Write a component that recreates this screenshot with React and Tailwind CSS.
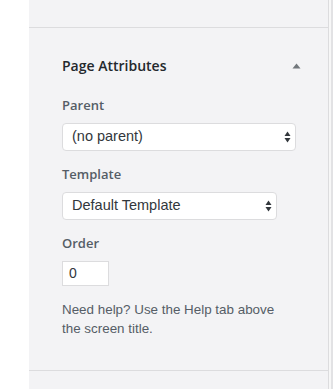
import React from 'react';

const SelectArrows = () => (
  <svg width="7" height="12" viewBox="0 0 7 12" className="shrink-0">
    <path d="M3.5 0.5 L6.5 5 L0.5 5 Z" fill="#32373c" />
    <path d="M3.5 11.5 L6.5 7 L0.5 7 Z" fill="#32373c" />
  </svg>
);

const FakeSelect = ({ value, width }) => (
  <div
    className={`${width} h-[28px] flex items-center justify-between pl-[9px] pr-[4px] bg-white border border-[#dcdcde] rounded-[4px] text-[14.5px] text-[#32373c]`}
    style={{ fontFamily: '"Liberation Sans", Arial, sans-serif' }}
  >
    <span>{value}</span>
    <SelectArrows />
  </div>
);

const App = () => {
  return (
    <div className="w-[333px] h-[389px] flex bg-white overflow-hidden">
      {/* left gutter */}
      <div className="w-[29px] bg-white" />

      {/* sidebar panel */}
      <div
        className="w-[300px] bg-[#f3f3f5] border-r border-[#dcdcde] flex flex-col"
        style={{ fontFamily: '"Open Sans", "Noto Sans", sans-serif' }}
      >
        <div className="h-[28px] border-b border-[#dcdcde]" />

        <div className="pl-[33px] pr-[27px] pt-[28px] h-[343px] border-b border-[#dcdcde]">
          {/* header */}
          <div className="flex items-center justify-between h-[20px]">
            <h2 className="text-[14px] font-semibold text-[#23282d] leading-[20px]">Page Attributes</h2>
            <svg width="9" height="6" viewBox="0 0 9 6">
              <path d="M4.5 0.5 L8.5 5.5 L0.5 5.5 Z" fill="#72777c" />
            </svg>
          </div>

          <div className="mt-[19px] text-[13px] font-semibold text-[#555d66] leading-[20px]">Parent</div>
          <div className="mt-[8px]">
            <FakeSelect value="(no parent)" width="w-[234px]" />
          </div>

          <div className="mt-[13px] text-[13px] font-semibold text-[#555d66] leading-[20px]">Template</div>
          <div className="mt-[8px]">
            <FakeSelect value="Default Template" width="w-[215px]" />
          </div>

          <div className="mt-[13px] text-[13px] font-semibold text-[#555d66] leading-[20px]">Order</div>
          <div
            className="mt-[8px] w-[47px] h-[25px] bg-white border border-[#dcdcde] flex items-center pl-[6px] text-[14px] text-[#32373c]"
            style={{ fontFamily: '"Liberation Sans", Arial, sans-serif' }}
          >
            0
          </div>

          <p
            className="mt-[14px] text-[13.4px] leading-[19px] text-[#555d66]"
            style={{ fontFamily: '"Liberation Sans", Arial, sans-serif' }}
          >
            Need help? Use the Help tab above
            <br />
            the screen title.
          </p>
        </div>
      </div>

      {/* scrollbar edge */}
      <div className="w-[4px] flex">
        <div className="w-[2px] bg-[#f7f7f7]" />
        <div className="w-[2px] bg-[#e2e2e4]" />
      </div>
    </div>
  );
};

export default App;
